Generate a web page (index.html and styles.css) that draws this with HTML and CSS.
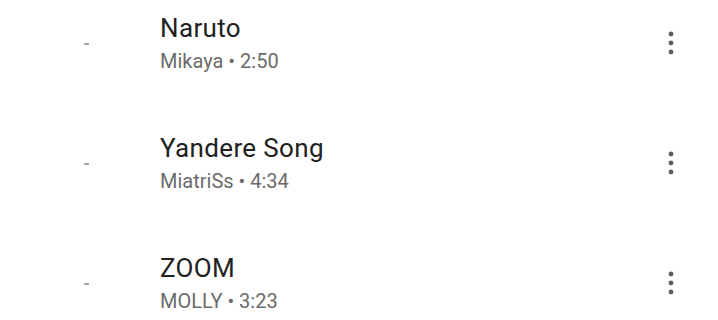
FILE: index.html
```html
<!DOCTYPE html>
<html lang="en">
<head>
  <meta charset="UTF-8" />
  <title>Songs</title>
  <link rel="stylesheet" href="styles.css">
</head>
<body>

  <ul class="song-list">
    <li class="song-row">
      <div class="song-lead"><span class="song-dash"></span></div>
      <div class="song-text">
        <div class="song-title">Naruto</div>
        <div class="song-meta">Mikaya • 2:50</div>
      </div>
      <button class="song-more" aria-label="More">
        <svg viewBox="0 0 24 24" width="24" height="24"><circle cx="12" cy="3" r="2.4"/><circle cx="12" cy="12" r="2.4"/><circle cx="12" cy="21" r="2.4"/></svg>
      </button>
    </li>
    <li class="song-row">
      <div class="song-lead"><span class="song-dash"></span></div>
      <div class="song-text">
        <div class="song-title">Yandere Song</div>
        <div class="song-meta">MiatriSs • 4:34</div>
      </div>
      <button class="song-more" aria-label="More">
        <svg viewBox="0 0 24 24" width="24" height="24"><circle cx="12" cy="3" r="2.4"/><circle cx="12" cy="12" r="2.4"/><circle cx="12" cy="21" r="2.4"/></svg>
      </button>
    </li>
    <li class="song-row">
      <div class="song-lead"><span class="song-dash"></span></div>
      <div class="song-text">
        <div class="song-title">ZOOM</div>
        <div class="song-meta">MOLLY • 3:23</div>
      </div>
      <button class="song-more" aria-label="More">
        <svg viewBox="0 0 24 24" width="24" height="24"><circle cx="12" cy="3" r="2.4"/><circle cx="12" cy="12" r="2.4"/><circle cx="12" cy="21" r="2.4"/></svg>
      </button>
    </li>
  </ul>

</body>
</html>
```

FILE: styles.css
```css
body {
  font-family: Roboto, 'Noto Sans', sans-serif;
  margin: 0;
  background: #fff;
  color: #212121;
  overflow: hidden;
}

.song-list {
  list-style: none;
  margin: -17px 0 0;
  padding: 0;
}

.song-row {
  display: flex;
  align-items: center;
  height: 120px;
}

.song-lead {
  width: 160px;
  flex-shrink: 0;
  display: flex;
  align-items: center;
}

.song-dash {
  display: block;
  width: 5px;
  height: 2px;
  margin-left: 84px;
  margin-top: 2px;
  background: #a8a8a8;
}

.song-text {
  flex: 1;
  min-width: 0;
}

.song-title {
  font-size: 26px;
  line-height: 32px;
  letter-spacing: 0.35px;
  color: #212121;
}

.song-meta {
  font-size: 20px;
  line-height: 26px;
  margin-top: 4px;
  color: #6b6b6b;
}

.song-more {
  border: 0;
  padding: 0;
  background: none;
  width: 24px;
  height: 24px;
  margin-right: 35px;
  fill: #5f5f5f;
}

.song-more svg {
  display: block;
}
```
